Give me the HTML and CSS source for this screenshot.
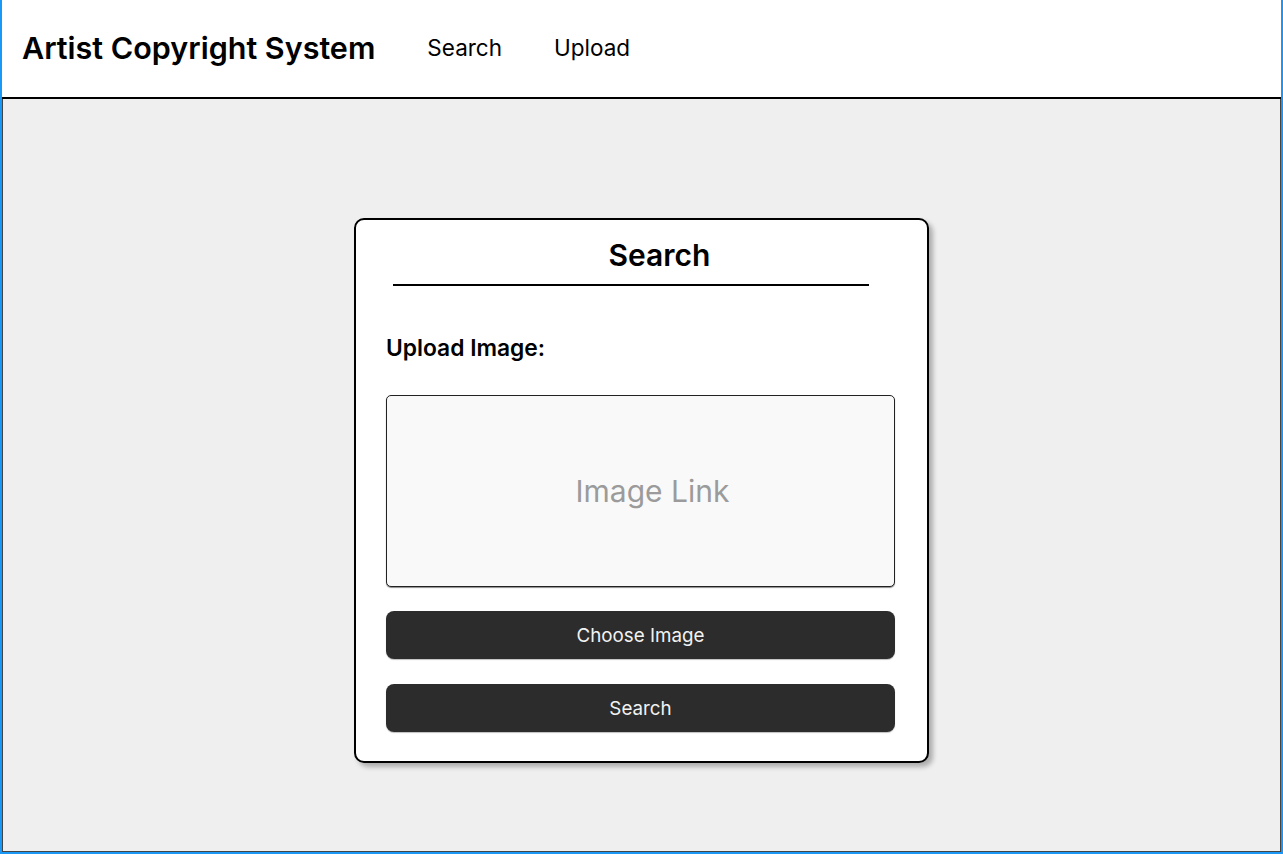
FILE: index.html
```html
<!DOCTYPE html>
<html lang="en">
<head>
<meta charset="utf-8">
<title>Artist Copyright System</title>
<link rel="stylesheet" href="styles.css">
</head>
<body>
<div class="frame">
  <header class="topbar">
    <h1 class="brand">Artist Copyright System</h1>
    <nav class="nav">
      <a class="nav-link" href="#">Search</a>
      <a class="nav-link" href="#">Upload</a>
    </nav>
  </header>
  <main class="main">
    <section class="card">
      <h2 class="card-title">Search</h2>
      <div class="rule"></div>
      <label class="field-label">Upload Image:</label>
      <div class="dropzone">Image Link</div>
      <button class="btn btn-choose">Choose Image</button>
      <button class="btn btn-search">Search</button>
    </section>
  </main>
</div>
</body>
</html>
```

FILE: styles.css
```css
* { box-sizing: border-box; }
html, body { margin: 0; padding: 0; }
body {
  font-family: Inter, "Noto Sans", "Liberation Sans", sans-serif;
  color: #000;
  background: #fff;
}
.frame {
  width: 1283px;
  height: 854px;
  border: 2px solid #1b98f5;
  border-top: none;
  display: flex;
  flex-direction: column;
}
.topbar {
  height: 99px;
  flex: none;
  display: flex;
  align-items: center;
  padding: 0 0 1px 20px;
  border-bottom: 2px solid #000;
  background: #fff;
}
.brand {
  margin: 0;
  font-size: 30.5px;
  font-weight: 600;
  line-height: 36px;
}
.nav {
  display: flex;
  gap: 52px;
  margin-left: 52px;
}
.nav-link {
  color: #000;
  text-decoration: none;
  font-size: 22.5px;
  font-weight: 400;
  line-height: 28px;
}
.main {
  flex: 1;
  background: #efefef;
  border: 1px solid #444;
  border-top: none;
  display: flex;
  justify-content: center;
  align-items: flex-start;
  padding-top: 119px;
}
.card {
  width: 575px;
  height: 545px;
  background: #fff;
  border: 2px solid #000;
  border-radius: 10px;
  box-shadow: 4px 4px 5px rgba(0, 0, 0, 0.28);
  padding: 18px 32px 0 30px;
  display: flex;
  flex-direction: column;
  align-items: flex-start;
}
.card-title {
  margin: 0 0 0 38px;
  align-self: center;
  font-size: 30px;
  font-weight: 600;
  line-height: 34px;
}
.rule {
  width: 476px;
  height: 2px;
  background: #000;
  margin: 12px 0 0 7px;
}
.field-label {
  margin-top: 50px;
  font-size: 22.8px;
  font-weight: 600;
  line-height: 24px;
}
.dropzone {
  margin-top: 35px;
  width: 509px;
  height: 192px;
  background: #f9f9f9;
  border: 1px solid #222;
  border-radius: 5px;
  box-shadow: 0 1px 1px rgba(0, 0, 0, 0.45);
  display: flex;
  align-items: center;
  justify-content: center;
  font-size: 30px;
  color: #9b9b9b;
  padding-left: 24px;
}
.btn {
  width: 509px;
  height: 48px;
  border: none;
  border-radius: 8px;
  background: #2c2c2c;
  color: #f2f2f2;
  font-family: Inter, "Noto Sans", "Liberation Sans", sans-serif;
  font-size: 18.8px;
  box-shadow: 0 1px 1px rgba(0, 0, 0, 0.25);
}
.btn-choose { margin-top: 24px; }
.btn-search { margin-top: 25px; }
```
